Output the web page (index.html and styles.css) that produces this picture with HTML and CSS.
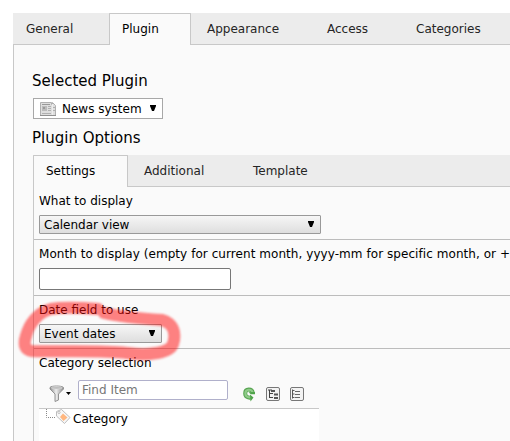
FILE: index.html
```html
<!DOCTYPE html>
<html lang="en">
<head>
<meta charset="utf-8">
<title>Plugin</title>
<link rel="stylesheet" href="styles.css">
</head>
<body>
<nav class="tabs main-tabs">
  <div class="tab general">General</div>
  <div class="tab active plugin">Plugin</div>
  <div class="tab appearance">Appearance</div>
  <div class="tab access">Access</div>
  <div class="tab categories">Categories</div>
</nav>
<main class="panel">
  <h2>Selected Plugin</h2>
  <div class="plugin-select">
    <svg class="news" width="16" height="14" viewBox="0 0 16 14">
      <path d="M.5.5h11v2h1v-2l3 3v10H.5z" fill="#dedede" stroke="#b0b0b0"/>
      <path d="M2 2.5h8" stroke="#999"/>
      <path d="M2 4h5v5H2z" fill="#bbb"/><path d="M3 5h2v2H3z" fill="#999"/>
      <path d="M8 4.5h3M8 6.5h3M8 8.5h3M2 11.5h9M13 5.5h2M13 8.5h2" stroke="#b0b0b0"/>
      <path d="M12.5 2v11" stroke="#eee"/><path d="M0 13.5h16" stroke="#909090"/>
    </svg>
    <span>News system</span>
    <svg class="arrow" width="6" height="6"><path d="M0 0h6v1L4 6H2L0 1z"/></svg>
  </div>
  <h2 class="options">Plugin Options</h2>
  <nav class="tabs inner-tabs">
    <div class="tab active settings">Settings</div>
    <div class="tab additional">Additional</div>
    <div class="tab template">Template</div>
  </nav>
  <section class="form">
    <div class="row display">
      <label>What to display</label>
      <div class="select wide"><span>Calendar view</span><svg class="arrow" width="6" height="6"><path d="M0 0h6v1L4 6H2L0 1z"/></svg></div>
    </div>
    <div class="row month">
      <label class="month-label">Month to display (empty for current month, yyyy-mm for specific month, or +</label>
      <input class="month-input" type="text">
    </div>
    <div class="row date">
      <label>Date field to use</label>
      <div class="select"><span>Event dates</span><svg class="arrow" width="6" height="6"><path d="M0 0h6v1L4 6H2L0 1z"/></svg></div>
      <svg class="marker" width="180" height="70" viewBox="10 295 180 70">
        <path d="M98 309C85 308 63 307 51 309C38 312 29 324 26 336C23 345 25 350 32 351C60 352 102 350 127 353C148 356 170 353 173 344C177 331 172 323 162 320C146 319 122 317 104 313" />
      </svg>
    </div>
    <div class="category">
      <label>Category selection</label>
      <div class="tools">
        <svg class="filter" width="16" height="18" viewBox="0 0 16 18">
          <defs><linearGradient id="metal"><stop offset="0" stop-color="#888"/><stop offset=".45" stop-color="#eee"/><stop offset="1" stop-color="#888"/></linearGradient></defs>
          <path d="M1 2.5C2 .5 13 .5 14.5 2.5V4L9.5 9v6L6 16.5V9L1 4z" fill="url(#metal)" stroke="#929292"/>
          <ellipse cx="7.8" cy="2.8" rx="5.5" ry="1.2" fill="#bbb" stroke="#ddd" stroke-width=".6"/>
        </svg>
        <svg class="caret" width="5" height="3"><path d="M0 0h5L2.5 3z"/></svg>
        <input class="find" type="text" placeholder="Find Item">
        <svg class="refresh" width="12" height="15" viewBox="0 0 12 15">
          <path d="M9.8 5.8C9 1.4 2.2 1.2 2.2 6.4c0 3.3 2.8 4.6 5.6 4.2" fill="none" stroke="#58a552" stroke-width="4"/>
          <path d="M9.6 5.4C8.8 1.8 2.4 1.6 2.4 6.4c0 3 2.6 4.2 5.2 3.9" fill="none" stroke="#8fcb89" stroke-width="2.2"/>
          <path d="M5.5 5.2L7.8 7.2H12V5zM7 7.5l3.5 3L7.5 14.5z" fill="#4fa34a"/>
        </svg>
        <svg class="tool expand" width="14" height="14" viewBox="0 0 14 14">
          <rect x=".5" y=".5" width="13" height="13" rx="1.5" fill="#f3f3f3" stroke="#777"/>
          <path d="M2 3h4M3.5 3v8M3.5 6.5H7M3.5 10.5H7" fill="none" stroke="#444"/>
          <path d="M5 4h4M8 7.5h4M8 11h4" stroke="#555" stroke-width="2"/>
        </svg>
        <svg class="tool" width="14" height="14" viewBox="0 0 14 14">
          <rect x=".5" y=".5" width="13" height="13" rx="1.5" fill="#f3f3f3" stroke="#777"/>
          <path d="M2.5 2.5v9M2.5 3.5h2M2.5 7h2M2.5 10.5h2" fill="none" stroke="#555"/>
          <path d="M5 4.5h5M5 7.5h5M5 10.5h5" stroke="#666"/>
        </svg>
      </div>
      <div class="tree">
        <svg class="branch" width="26" height="16" viewBox="0 0 26 16">
          <path d="M.5 0v8.5H10" fill="none" stroke="#888" stroke-dasharray="1 1"/>
          <path d="M10.5 2.5l5-2L24 8.5 18.5 14.5 10.5 7z" fill="#f7f7f7" stroke="#bdbdbd"/>
          <path d="M17 4.5l4.5 4-4 3.5-3.5-4z" fill="#ffb780"/><circle cx="13" cy="3.5" r="1.1" fill="#fff" stroke="#aaa" stroke-width=".7"/>
        </svg>
        <span>Category</span>
      </div>
    </div>
  </section>
</main>
</body>
</html>
```
FILE: styles.css
```css
* { box-sizing: border-box; }
html, body { height: 100%; }
body { margin: 0; padding: 13px 0 0 13px; background: #fff; color: #000; font: 12px/16px "DejaVu Sans", sans-serif; overflow: hidden; }
svg { display: block; flex: none; }
.tabs { display: flex; height: 32px; background: #ececec; color: #252525; }
.tab { height: 32px; flex: none; padding-top: 8px; border-bottom: 1px solid #c8c8c8; white-space: nowrap; }
.tab:last-child { flex: 1 0 auto; }
.tab.active { background: #fafafa; border: 1px solid #c8c8c8; border-bottom: 0; border-radius: 1px 1px 0 0; padding-top: 7px; color: #000; }
.general { width: 96px; padding-left: 13px; }
.plugin { width: 82px; padding-left: 12px; }
.appearance { width: 120px; padding-left: 16px; }
.access { width: 88px; padding-left: 16px; }
.categories { padding-left: 17px; }
.panel { height: 410px; background: #fafafa; border-left: 1px solid #c8c8c8; padding: 26px 0 0 19px; }
h2 { margin: 0 0 0 -1px; font-size: 15px; line-height: 20px; font-weight: normal; }
.plugin-select { display: flex; align-items: center; width: 130px; height: 21px; margin-top: 7px; padding-left: 6px; border: 1px solid #a8a8a8; background: #fff; }
.plugin-select span { width: 88px; margin-left: 6px; }
.arrow { margin-bottom: 2px; fill: #000; }
.options { margin-top: 9px; }
.inner-tabs { margin-top: 7px; }
.settings { width: 95px; padding-left: 12px; }
.additional { width: 109px; padding-left: 16px; }
.template { padding-left: 16px; }
.form { border-left: 1px solid #c8c8c8; height: 260px; }
.row { border-bottom: 1px solid #bcbcbc; padding-left: 5px; }
label { display: block; height: 16px; white-space: nowrap; }
.month-label { letter-spacing: .06px; }
.display { height: 53px; padding-top: 6px; }
.month { height: 56px; padding-top: 6px; }
.date { height: 53px; padding-top: 6px; position: relative; }
.select { width: 123px; height: 19px; margin-top: 6px; padding: 0 6px 0 4px; display: flex; justify-content: space-between; align-items: center; border: 1px solid #999; border-radius: 1px; background: linear-gradient(#f6f6f6, #dedede); }
.wide { width: 282px; }
.month-input { display: block; width: 192px; height: 22px; margin-top: 6px; border: 1px solid #777; border-radius: 2px; background: #fff; }
.marker { position: absolute; left: -24px; top: -1px; z-index: 1; pointer-events: none; }
.marker path { fill: none; stroke: #ff0808; stroke-opacity: .5; stroke-width: 12; stroke-linecap: round; stroke-linejoin: round; filter: blur(.8px); }
.category { padding: 6px 0 0 5px; }
.tools { display: flex; align-items: center; width: 280px; height: 37px; padding: 1px 0 0 10px; }
.filter { margin-top: 8px; }
.caret { margin: 7px 7px 0 1px; }
.find { width: 150px; height: 20px; padding: 0 3px; border: 1px solid #b0b0cb; border-radius: 2px; background: #fff; font: inherit; }
.find::placeholder { color: #777; opacity: 1; }
.refresh { margin: 9px 11px 0 15px; }
.tool { margin-top: 8px; }
.expand { margin-right: 10px; }
.tree { width: 280px; height: 40px; border-top: 1px solid #c8c8c8; background: #fff; display: flex; padding-left: 7px; }
.tree span { margin: 2px 0 0 1px; }
```
